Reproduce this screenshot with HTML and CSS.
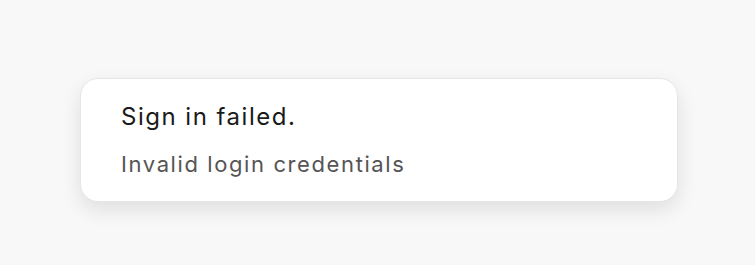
FILE: index.html
```html
<!DOCTYPE html>
<html lang="en">
<head>
    <meta charset="UTF-8">
    <meta name="viewport" content="width=device-width, initial-scale=1.0">
    <title>Sign in</title>
    <link rel="stylesheet" href="styles.css">
</head>
<body>
    <div class="stage">
        <div class="toast">
            <div class="toast-title">Sign in failed.</div>
            <div class="toast-desc">Invalid login credentials</div>
        </div>
    </div>
</body>
</html>
```

FILE: styles.css
```css
html, body {
    height: 100%;
}

body {
    font-family: 'Inter', 'Liberation Sans', sans-serif;
    background: #f8f8f8;
    margin: 0;
    padding: 0;
}

.stage {
    box-sizing: border-box;
    min-height: 100%;
    padding: 78px 0 60px 80px;
}

.toast {
    box-sizing: border-box;
    width: 598px;
    height: 124px;
    padding: 22px 40px 0 40px;
    background-color: #fff;
    border: 1px solid #e6e6e6;
    border-radius: 18px;
    box-shadow: 0 8px 20px rgba(0, 0, 0, 0.1);
}

.toast-title {
    font-size: 24px;
    line-height: 32px;
    letter-spacing: 1.5px;
    color: #1a1a1a;
}

.toast-desc {
    margin-top: 16px;
    font-size: 22px;
    line-height: 30px;
    letter-spacing: 1.6px;
    color: #555;
}
```
